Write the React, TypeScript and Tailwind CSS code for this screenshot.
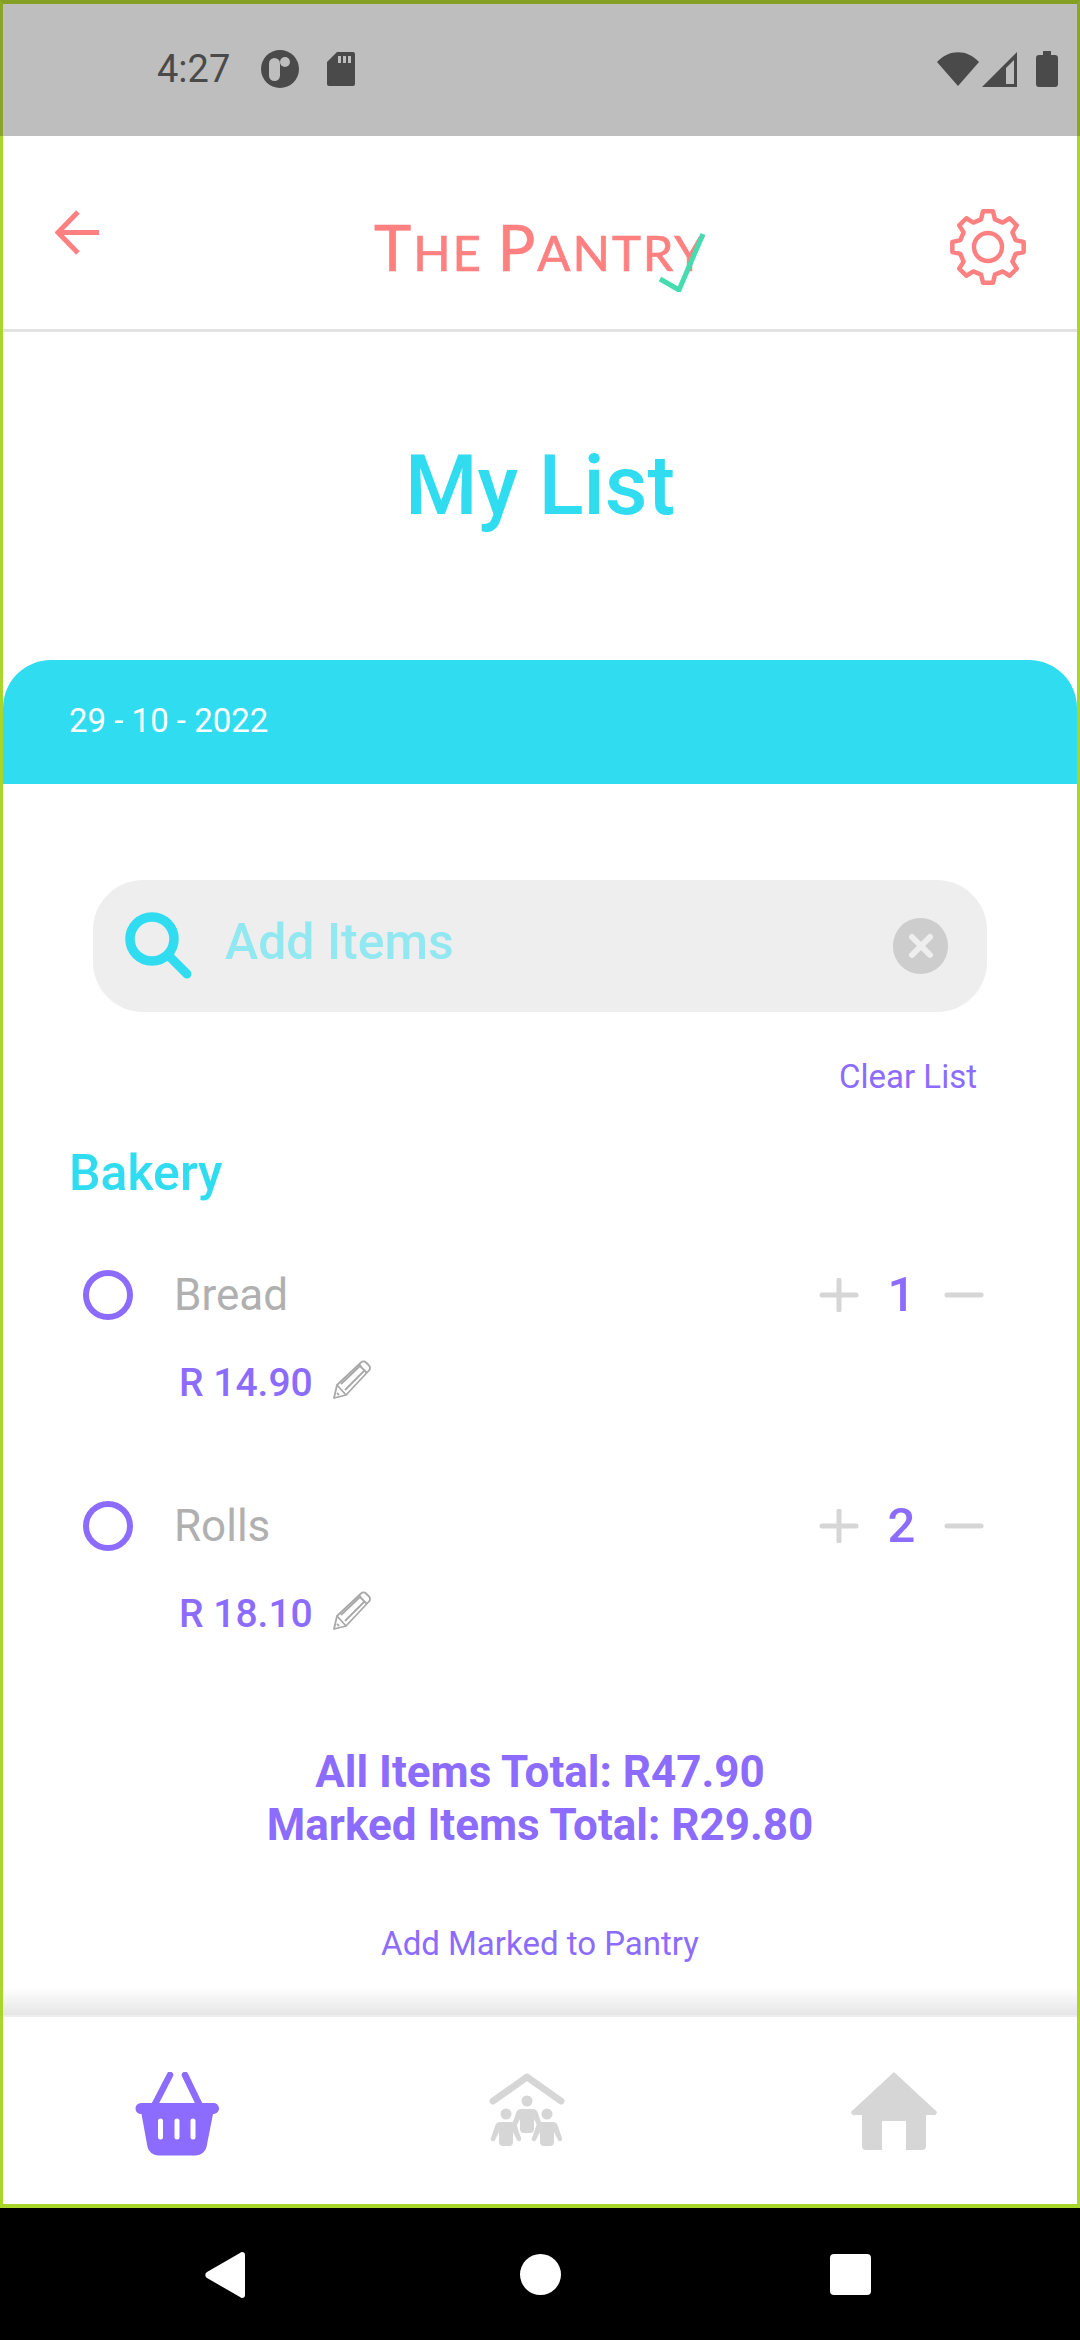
import React from "react";

const gearPath = (() => {
  const pts: string[] = [];
  const teeth = 8;
  const rOut = 36;
  const rIn = 28.5;
  for (let i = 0; i < teeth; i++) {
    const a = (i * 360) / teeth - 90;
    const list: [number, number][] = [
      [a - 14, rIn],
      [a - 8, rOut],
      [a + 8, rOut],
      [a + 14, rIn],
    ];
    for (const [deg, r] of list) {
      const t = (deg * Math.PI) / 180;
      pts.push(`${(39 + r * Math.cos(t)).toFixed(2)} ${(39 + r * Math.sin(t)).toFixed(2)}`);
    }
  }
  return `M${pts.join("L")}Z`;
})();

const Back = () => (
  <svg width="46" height="46" viewBox="0 0 46 46" fill="none" stroke="#ff8080" strokeWidth="5">
    <path d="M44 22.5H5" />
    <path d="M23 2 3 22.5 23 43" />
  </svg>
);

const Gear = () => (
  <svg width="78" height="78" viewBox="0 0 78 78" fill="none" stroke="#ff8080" strokeWidth="4.5" strokeLinejoin="round">
    <circle cx="39" cy="39" r="14" />
    <path d={gearPath} />
  </svg>
);

const Check = () => (
  <svg className="absolute left-[284px] top-[17px]" width="48" height="60" viewBox="0 0 48 60" fill="none" stroke="#45dcb0" strokeWidth="5">
    <path d="M2 47 L21 58 L45 2" />
  </svg>
);

const Search = () => (
  <svg width="68" height="68" viewBox="0 0 68 68" fill="none" stroke="#30dcf0">
    <circle cx="27" cy="27" r="22" strokeWidth="9.500" />
    <path d="M44 44 62 62" strokeWidth="9" strokeLinecap="round" />
  </svg>
);

const ClearBtn = () => (
  <div className="flex h-[56px] w-[55px] items-center justify-center rounded-full bg-[#cdcdcd]">
    <svg width="28" height="28" viewBox="0 0 28 28" stroke="#eeeeee" strokeWidth="6" strokeLinecap="round">
      <path d="M5 5 23 23M23 5 5 23" />
    </svg>
  </div>
);

const Pencil = () => (
  <svg width="40" height="40" viewBox="0 0 40 40" fill="none" stroke="#a8a8a8" strokeWidth="1.8" strokeLinejoin="round">
    <path d="M2 38 5 25 29 2.500a3.500 3.500 0 0 1 5 0l3 3a3.500 3.500 0 0 1 0 5L14 35z" />
    <path d="M5 25 14 35M27 5 35 13M9 24 29 5M13 30 33 10M5 33l2 2" />
  </svg>
);

const Plus = () => (
  <svg width="40" height="34" viewBox="0 0 40 34" stroke="#d6d6d6" strokeWidth="5" strokeLinecap="round">
    <path d="M3 17H37M20 2V32" />
  </svg>
);

const Minus = () => (
  <svg width="40" height="6" viewBox="0 0 40 6" stroke="#d6d6d6" strokeWidth="5" strokeLinecap="round">
    <path d="M3 3H37" />
  </svg>
);

const Basket = () => (
  <svg width="84" height="84" viewBox="0 0 84 84">
    <path fill="#8c6cff" d="M6 31h72a5.500 5.500 0 0 1 1 11h-1l-6.500 33a11 11 0 0 1-10.500 8.500H23A11 11 0 0 1 12.500 75L6.500 42H6a5.500 5.500 0 0 1 0-11z" />
    <g stroke="#8c6cff" strokeWidth="6.500" strokeLinecap="round">
      <path d="M20 32 35 3M64 32 50 3" />
    </g>
    <g stroke="#ffffff" strokeWidth="5" strokeLinecap="round">
      <path d="M25.500 49V65M42 49V65M58 49V65" />
    </g>
  </svg>
);

const Person = ({ x, y }: { x: number; y: number }) => (
  <g transform={`translate(${x} ${y})`} fill="#d6d6d6">
    <circle cx="0" cy="-19" r="5.500" />
    <path d="M-6-11H6a5 5 0 0 1 4.500 3L15 5a2 2 0 0 1-4 2L7-1V9a4 4 0 0 1-4 4H-3a4 4 0 0 1-4-4V-1L-11 7a2 2 0 0 1-4-2l4.500-13a5 5 0 0 1 4.500-3z" />
  </g>
);

const Family = () => (
  <svg width="76" height="76" viewBox="0 0 76 76">
    <path d="M4 29 38 5 72 29" fill="none" stroke="#d6d6d6" strokeWidth="7" strokeLinecap="round" strokeLinejoin="round" />
    <Person x={38} y={48} />
    <Person x={17} y={61} />
    <Person x={58} y={61} />
  </svg>
);

const HomeIcon = () => (
  <svg width="86" height="78" viewBox="0 0 86 78">
    <path fill="#d6d6d6" d="M43 0 84 38a2.500 2.500 0 0 1-2 5H75v31a4 4 0 0 1-4 4H55V49H31v29H15a4 4 0 0 1-4-4V43H4a2.500 2.500 0 0 1-2-5z" />
  </svg>
);

const Item = ({ name, qty, price }: { name: string; qty: string; price: string }) => (
  <div className="flex h-[231px] flex-col">
    <div className="flex h-[50px] items-center pl-[80px] pr-[93px]">
      <div className="h-[50px] w-[50px] rounded-full border-[6px] border-[#8c6cff]" />
      <span className="ml-[41px] flex-1 text-[44px] text-[#b0b0b0]">{name}</span>
      <Plus />
      <span className="w-[85px] text-center text-[49px] font-medium text-[#8c6cff]">{qty}</span>
      <Minus />
    </div>
    <div className="mt-[43px] flex items-center pl-[176px]">
      <span className="text-[39px] leading-[40px] font-medium text-[#8c6cff]">{price}</span>
      <span className="ml-[19px] -translate-y-[3px]"><Pencil /></span>
    </div>
  </div>
);

export default function App() {
  return (
    <div className="flex h-[2340px] w-[1080px] flex-col bg-black font-['Roboto',sans-serif]">
      {/* status bar */}
      <div className="flex h-[136px] shrink-0 items-center border-x-[3px] border-t-[4px] border-x-[#8aa629] border-t-[#84a024] bg-[#bebebe] pb-[2px] pl-[154px] pr-[19px]">
        <span className="text-[38px] leading-none text-[#4a4a4a]">4:27</span>
        <svg className="ml-[31px]" width="38" height="38" viewBox="0 0 38 38">
          <circle cx="19" cy="19" r="19" fill="#4a4a4a" />
          <rect x="8" y="8" width="11" height="23" rx="5.500" fill="#bebebe" />
          <circle cx="24" cy="12" r="5" fill="#bebebe" />
        </svg>
        <svg className="ml-[28px]" width="28" height="34" viewBox="0 0 28 34">
          <path fill="#4a4a4a" d="M10 0H26a2 2 0 0 1 2 2V32a2 2 0 0 1-2 2H2a2 2 0 0 1-2-2V10z" />
          <path fill="#bebebe" d="M11 4h3v7h-3zM16 4h3v7h-3zM21 4h3v7h-3z" />
        </svg>
        <div className="flex-1" />
        <svg width="42" height="34" viewBox="0 0 42 34">
          <path fill="#4a4a4a" d="M21 34 0 10C12-3 30-3 42 10z" />
        </svg>
        <svg className="ml-[3px]" width="35" height="35" viewBox="0 0 35 35">
          <path fill="#4a4a4a" d="M35 0V35H0zM32 8 24 16V32H32z" fillRule="evenodd" />
        </svg>
        <svg className="ml-[19px]" width="22" height="36" viewBox="0 0 22 36">
          <path fill="#4a4a4a" d="M7 0H15V4H19a3 3 0 0 1 3 3V33a3 3 0 0 1-3 3H3a3 3 0 0 1-3-3V7a3 3 0 0 1 3-3H7z" />
        </svg>
      </div>

      {/* app */}
      <div className="flex h-[2072px] shrink-0 flex-col border-x-[3px] border-b-[4px] border-[#a8d62a] bg-white">
        {/* header */}
        <div className="relative flex h-[196px] shrink-0 items-center justify-between border-b-[3px] border-[#e3e3e3] pl-[52px] pr-[52px]">
          <span><Back /></span>
          <div className="relative w-[330px] translate-x-[15px] translate-y-[14px] font-['Lato',sans-serif] text-[#ff8080] [-webkit-text-stroke:0.7px_#ff8080]">
            <span className="whitespace-nowrap text-[49px] leading-none tracking-[2px]">
              <span className="text-[63px]">T</span>HE <span className="text-[63px]">P</span>ANTRY
            </span>
            <Check />
          </div>
          <span className="translate-x-[2px] translate-y-[14px]"><Gear /></span>
        </div>

        {/* title */}
        <h1 className="mt-[108px] h-[92px] shrink-0 text-center text-[83px] leading-[92px] font-medium text-[#30dcf0]">My List</h1>

        {/* date band */}
        <div className="mt-[128px] flex h-[124px] shrink-0 rounded-t-[48px] bg-[#30dcf0] pl-[66px] pt-[40px] text-[33px] leading-[42px] text-white">
          29 - 10 - 2022
        </div>

        {/* search */}
        <div className="mx-[90px] mt-[96px] flex h-[132px] shrink-0 items-center rounded-[50px] bg-[#eeeeee] pl-[32px] pr-[39px]">
          <Search />
          <span className="ml-[32px] flex-1 pb-[8px] text-[50px] font-medium text-[#91e8f0]">Add Items</span>
          <ClearBtn />
        </div>

        {/* clear list */}
        <div className="mt-[45px] h-[40px] shrink-0 pr-[100px] text-right text-[33px] leading-[40px] text-[#8c6cff]">Clear List</div>

        {/* section */}
        <div className="mt-[51px] h-[50px] shrink-0 pl-[66px] text-[50px] leading-[50px] font-medium text-[#30dcf0]">Bakery</div>

        <div className="mt-[72px] shrink-0">
          <Item name="Bread" qty="1" price="R 14.90" />
          <Item name="Rolls" qty="2" price="R 18.10" />
        </div>

        {/* totals */}
        <div className="mt-[14px] shrink-0 text-center text-[44px] leading-[53px] font-bold text-[#8c6cff]">
          <div>All Items Total: R47.90</div>
          <div>Marked Items Total: R29.80</div>
        </div>

        <div className="mt-[72px] h-[40px] shrink-0 text-center text-[33px] leading-[40px] text-[#8c6cff]">Add Marked to Pantry</div>

        <div className="flex-1" />
        <div className="h-[28px] shrink-0 bg-gradient-to-b from-white to-[#e6e6e6]" />

        {/* bottom nav */}
        <div className="flex h-[189px] shrink-0 border-t-[2px] border-[#eeeeee] pt-[55px]">
          <div className="ml-[132px]"><Basket /></div>
          <div className="ml-[270px]"><Family /></div>
          <div className="ml-[286px]"><HomeIcon /></div>
        </div>
      </div>

      {/* android nav */}
      <div className="flex flex-1 items-start pt-[44px]">
        <svg className="ml-[205px]" width="41" height="46" viewBox="0 0 41 46">
          <path fill="#fff" d="M37 0a3 3 0 0 1 3 3V43a3 3 0 0 1-3 3q-1 0-2-1L2 26a3.500 3.500 0 0 1 0-6L35 1q1-1 2-1z" />
        </svg>
        <div className="ml-[274px] mt-[2px] h-[41px] w-[41px] rounded-full bg-white" />
        <div className="ml-[269px] mt-[2px] h-[41px] w-[41px] rounded-[4px] bg-white" />
      </div>
    </div>
  );
}
